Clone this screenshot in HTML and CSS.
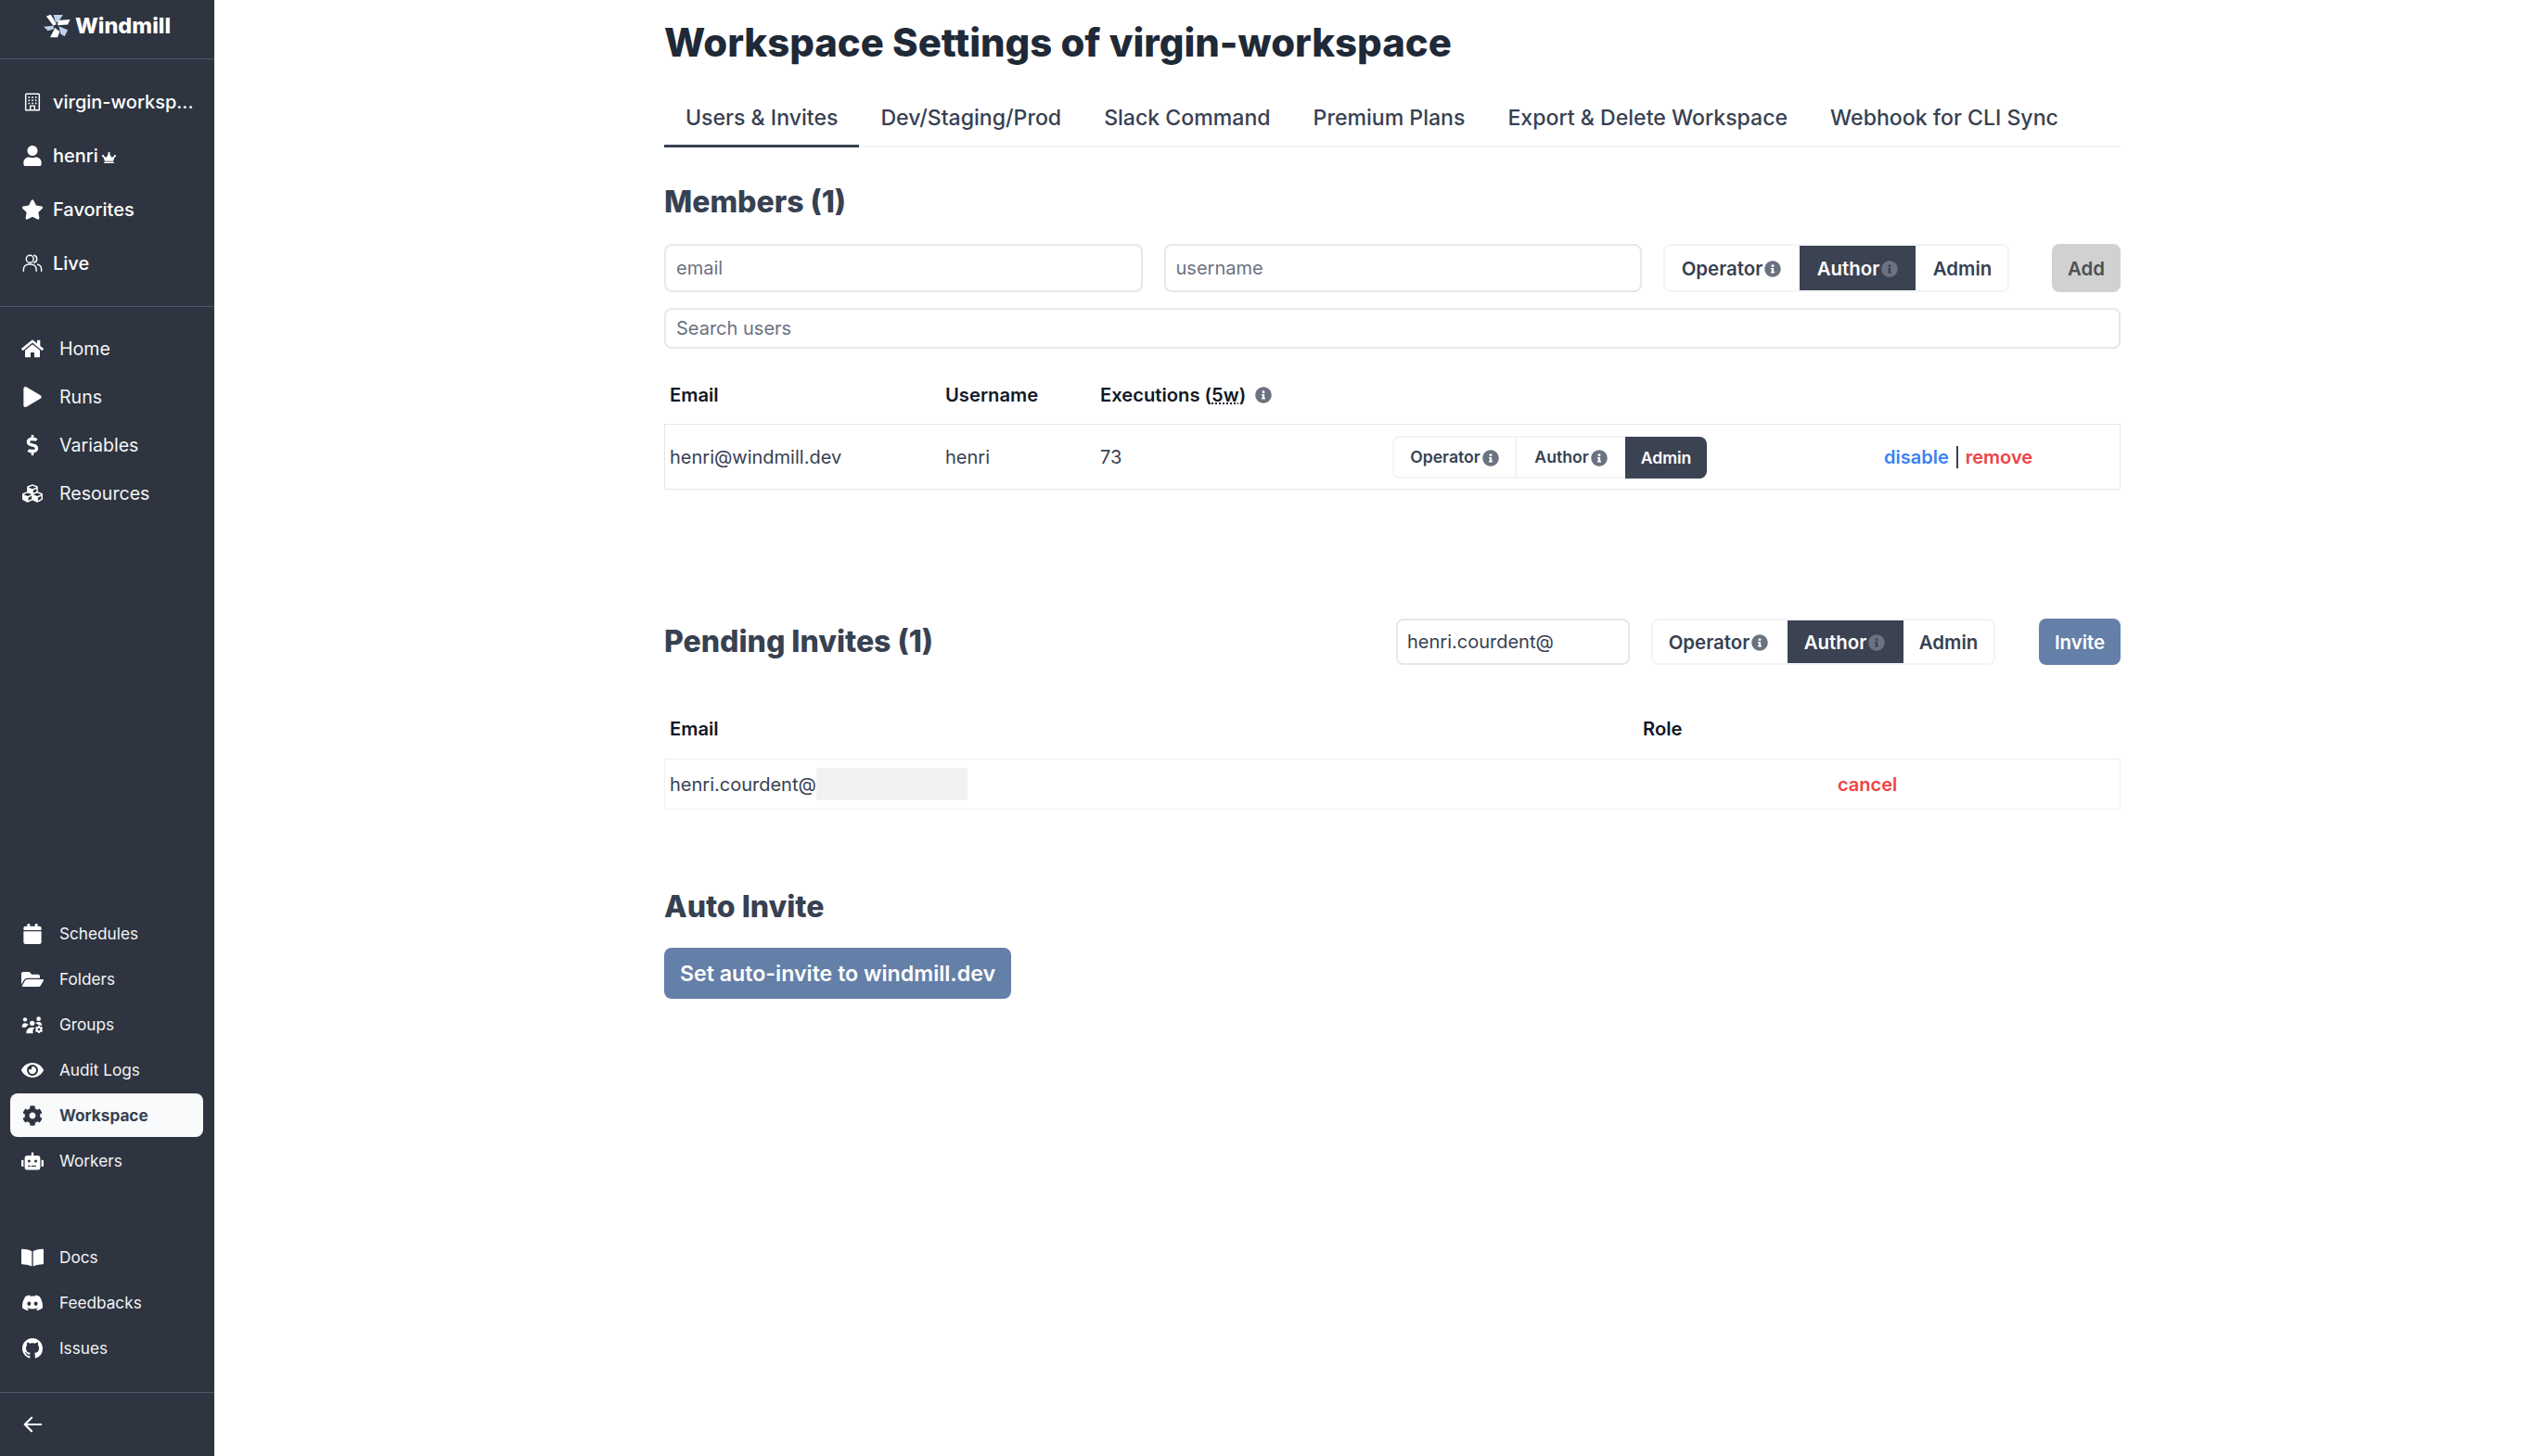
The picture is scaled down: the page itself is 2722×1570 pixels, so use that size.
FILE: index.html
```html
<!DOCTYPE html>
<html lang="en">
<head>
<meta charset="utf-8">
<title>Workspace Settings</title>
<link rel="stylesheet" href="styles.css">
</head>
<body>
<svg class="defs" aria-hidden="true">
  <symbol id="i-info" viewBox="0 0 512 512"><path d="M256 8C119.043 8 8 119.083 8 256c0 136.997 111.043 248 248 248s248-111.003 248-248C504 119.083 392.957 8 256 8zm0 110c23.196 0 42 18.804 42 42s-18.804 42-42 42-42-18.804-42-42 18.804-42 42-42zm56 254c0 6.627-5.373 12-12 12h-88c-6.627 0-12-5.373-12-12v-24c0-6.627 5.373-12 12-12h12v-64h-12c-6.627 0-12-5.373-12-12v-24c0-6.627 5.373-12 12-12h64c6.627 0 12 5.373 12 12v100h12c6.627 0 12 5.373 12 12v24z"/></symbol>
  <symbol id="i-cog" viewBox="0 0 512 512"><path d="M487.4 315.7l-42.6-24.6c4.3-23.2 4.3-47 0-70.2l42.6-24.6c4.9-2.8 7.1-8.6 5.5-14-11.1-35.6-30-67.8-54.7-94.6-3.8-4.1-10-5.1-14.8-2.3L380.8 110c-17.9-15.4-38.5-27.3-60.8-35.1V25.8c0-5.6-3.9-10.5-9.4-11.7-36.7-8.2-74.3-7.8-109.2 0-5.5 1.2-9.4 6.1-9.4 11.7V75c-22.2 7.9-42.8 19.8-60.8 35.1L88.7 85.5c-4.9-2.8-11-1.9-14.8 2.3-24.7 26.7-43.6 58.9-54.7 94.6-1.7 5.4.6 11.2 5.5 14L67.3 221c-4.3 23.2-4.3 47 0 70.2l-42.6 24.6c-4.9 2.8-7.1 8.6-5.5 14 11.1 35.6 30 67.8 54.7 94.6 3.8 4.1 10 5.1 14.8 2.3l42.6-24.6c17.9 15.4 38.5 27.3 60.8 35.1v49.2c0 5.6 3.9 10.5 9.4 11.7 36.7 8.2 74.3 7.8 109.2 0 5.5-1.2 9.4-6.1 9.4-11.7v-49.2c22.2-7.9 42.8-19.8 60.8-35.1l42.6 24.6c4.9 2.8 11 1.9 14.8-2.3 24.7-26.7 43.6-58.9 54.7-94.6 1.5-5.5-.7-11.3-5.6-14.1zM256 336c-44.1 0-80-35.9-80-80s35.9-80 80-80 80 35.9 80 80-35.9 80-80 80z"/></symbol>
</svg>
<div class="app">
  <aside class="sidebar">
    <div class="brand">
      <svg class="logo" viewBox="25 25 83 75">
        <polygon class="blade-w" points="33,32 47,27 65,57 55,62"/>
        <polygon class="blade-b" points="55,28 85,28 70,50 62,50"/>
        <polygon class="blade-w" points="70,45 107,42 100,58 68,60"/>
        <polygon class="blade-b" points="72,63 100,75 90,95 78,88"/>
        <polygon class="blade-w" points="60,68 75,80 68,98 45,98"/>
        <polygon class="blade-b" points="25,65 55,62 57,72 38,78"/>
      </svg>
      <span class="brand-name">Windmill</span>
    </div>
    <nav class="group group-top">
      <a class="item item-strong">
        <svg class="ico" viewBox="0 0 24 24"><path class="outline" d="M5 2.500h14a1 1 0 0 1 1 1v18H4v-18a1 1 0 0 1 1-1ZM9.500 21.500v-5h5v5"/><path class="outline dots" d="M8 6.500h.01M12 6.500h.01M16 6.500h.01M8 10h.01M12 10h.01M16 10h.01M8 13.500h.01M12 13.500h.01M16 13.500h.01"/></svg>
        <span class="item-label">virgin-worksp...</span>
      </a>
      <a class="item item-strong">
        <svg class="ico" viewBox="0 0 448 512"><path d="M224 256c70.7 0 128-57.3 128-128S294.7 0 224 0 96 57.3 96 128s57.3 128 128 128zm89.6 32h-16.7c-22.2 10.2-46.9 16-72.9 16s-50.6-5.8-72.9-16h-16.7C60.2 288 0 348.2 0 422.4V464c0 26.5 21.5 48 48 48h352c26.5 0 48-21.5 48-48v-41.6c0-74.2-60.2-134.4-134.4-134.4z"/></svg>
        <span class="item-label">henri</span>
        <svg class="crown" viewBox="0 0 640 512"><path d="M528 448H112c-8.8 0-16 7.2-16 16v32c0 8.8 7.2 16 16 16h416c8.8 0 16-7.2 16-16v-32c0-8.8-7.2-16-16-16zm64-320c-26.5 0-48 21.5-48 48 0 7.1 1.6 13.7 4.4 19.8L476 239.2c-15.4 9.2-35.3 4-44.2-11.6L350.3 85C361 76.2 368 63 368 48c0-26.5-21.5-48-48-48s-48 21.5-48 48c0 15 7 28.2 17.7 37l-81.5 142.6c-8.9 15.6-28.9 20.8-44.2 11.6l-72.3-43.4c2.7-6 4.4-12.7 4.4-19.8 0-26.5-21.6-48-48.1-48S0 149.5 0 176s21.5 48 48 48c2.6 0 5.2-.4 7.7-.8L128 416h384l72.3-192.8c2.5.4 5.1.8 7.7.8 26.5 0 48-21.5 48-48s-21.5-48-48-48z"/></svg>
      </a>
      <a class="item item-strong">
        <svg class="ico" viewBox="0 0 576 512"><path d="M259.3 17.8L194 150.2 47.9 171.5c-26.2 3.8-36.7 36.1-17.7 54.6l105.7 103-25 145.5c-4.5 26.3 23.2 46 46.4 33.7L288 439.6l130.7 68.7c23.2 12.2 50.9-7.4 46.4-33.7l-25-145.5 105.7-103c19-18.5 8.5-50.8-17.7-54.6L382 150.2 316.7 17.8c-11.7-23.6-45.6-23.9-57.4 0z"/></svg>
        <span class="item-label">Favorites</span>
      </a>
      <a class="item item-strong">
        <svg class="ico" viewBox="0 0 24 24"><path class="outline" d="M1.500 21v-2a6 6 0 0 1 6-6h3a6 6 0 0 1 6 6v2M14 2.500a4.500 4.500 0 0 1 0 8.600M18 13.200a6 6 0 0 1 4.500 5.800v2"/><circle class="outline" cx="9" cy="6.800" r="4.300"/></svg>
        <span class="item-label">Live</span>
      </a>
    </nav>
    <nav class="group group-main">
      <a class="item item-main">
        <svg class="ico" viewBox="0 0 576 512"><path d="M280.37 148.26L96 300.11V464a16 16 0 0 0 16 16l112.06-.29a16 16 0 0 0 15.92-16V368a16 16 0 0 1 16-16h64a16 16 0 0 1 16 16v95.64a16 16 0 0 0 16 16.05L464 480a16 16 0 0 0 16-16V300L295.67 148.26a12.19 12.19 0 0 0-15.3 0zM571.6 251.47L488 182.56V44.05a12 12 0 0 0-12-12h-56a12 12 0 0 0-12 12v72.61L318.47 43a48 48 0 0 0-61 0L4.34 251.47a12 12 0 0 0-1.6 16.9l25.5 31A12 12 0 0 0 45.15 301l235.22-193.74a12.19 12.19 0 0 1 15.3 0L530.9 301a12 12 0 0 0 16.9-1.6l25.5-31a12 12 0 0 0-1.7-16.93z"/></svg>
        <span class="item-label">Home</span>
      </a>
      <a class="item item-main">
        <svg class="ico" viewBox="0 0 448 512"><path d="M424.4 214.7L72.4 6.6C43.8-10.3 0 6.1 0 47.9V464c0 37.5 40.7 60.1 72.4 41.3l352-208c31.4-18.5 31.5-64.1 0-82.6z"/></svg>
        <span class="item-label">Runs</span>
      </a>
      <a class="item item-main">
        <svg class="ico" viewBox="0 0 288 512"><path d="M209.2 233.4l-108-31.6C88.7 198.2 80 186.5 80 173.5c0-16.3 13.2-29.5 29.5-29.5h66.3c12.2 0 24.2 3.7 34.2 10.5 6.1 4.1 14.3 3.1 19.5-2l34.8-34c7.1-6.9 6.1-18.4-1.8-24.5C238 74.8 207.4 64.1 176 64V16c0-8.8-7.2-16-16-16h-32c-8.8 0-16 7.2-16 16v48h-2.5C45.8 64-5.4 118.7.5 183.6c4.2 46.1 39.4 83.6 83.8 96.6l102.5 30c12.5 3.7 21.2 15.3 21.2 28.3 0 16.3-13.2 29.5-29.5 29.5h-66.3C100 368 88 364.3 78 357.5c-6.1-4.1-14.3-3.1-19.5 2l-34.8 34c-7.1 6.9-6.1 18.4 1.8 24.5 24.5 19.2 55.1 29.9 86.5 30v48c0 8.8 7.2 16 16 16h32c8.8 0 16-7.2 16-16v-48.2c46.6-.9 90.3-28.6 105.7-72.7 21.5-61.6-14.6-124.8-72.5-141.7z"/></svg>
        <span class="item-label">Variables</span>
      </a>
      <a class="item item-main">
        <svg class="ico" viewBox="0 0 512 512"><path d="M488.6 250.2L392 214V105.5c0-15-9.3-28.4-23.4-33.7l-100-37.5c-8.1-3.1-17.1-3.1-25.3 0l-100 37.5c-14.1 5.3-23.4 18.7-23.4 33.7V214l-96.6 36.2C9.3 255.5 0 268.9 0 283.9V394c0 13.6 7.7 26.1 19.9 32.2l100 50c10.1 5.1 22.1 5.1 32.2 0l103.9-52 103.9 52c10.1 5.1 22.1 5.1 32.2 0l100-50c12.2-6.1 19.9-18.6 19.9-32.2V283.9c0-15-9.3-28.4-23.4-33.7zM358 214.8l-85 31.9v-68.2l85-37v73.3zM154 104.1l102-38.2 102 38.2v.6l-102 41.4-102-41.4v-.6zm84 291.1l-85 42.5v-79.1l85-38.8v75.4zm0-112l-102 41.4-102-41.4v-.6l102-38.2 102 38.2v.6zm240 112l-85 42.5v-79.1l85-38.8v75.4zm0-112l-102 41.4-102-41.4v-.6l102-38.2 102 38.2v.6z"/></svg>
        <span class="item-label">Resources</span>
      </a>
    </nav>
    <nav class="group group-low">
      <a class="item item-small">
        <svg class="ico" viewBox="0 0 448 512"><path d="M12 192h424c6.6 0 12 5.4 12 12v260c0 26.5-21.5 48-48 48H48c-26.5 0-48-21.5-48-48V204c0-6.6 5.4-12 12-12zm436-44v-36c0-26.5-21.5-48-48-48h-48V12c0-6.6-5.4-12-12-12h-40c-6.6 0-12 5.4-12 12v52H160V12c0-6.6-5.4-12-12-12h-40c-6.6 0-12 5.4-12 12v52H48C21.5 64 0 85.5 0 112v36c0 6.6 5.4 12 12 12h424c6.6 0 12-5.4 12-12z"/></svg>
        <span class="item-label">Schedules</span>
      </a>
      <a class="item item-small">
        <svg class="ico" viewBox="0 0 576 512"><path d="M572.694 292.093L500.27 416.248A63.997 63.997 0 0 1 444.989 448H45.025c-18.523 0-30.064-20.093-20.731-36.093l72.424-124.155A64 64 0 0 1 152 256h399.964c18.523 0 30.064 20.093 20.73 36.093zM152 224h328v-48c0-26.51-21.49-48-48-48H272l-64-64H48C21.49 64 0 85.49 0 112v278.046l69.077-118.418C86.214 242.25 117.989 224 152 224z"/></svg>
        <span class="item-label">Folders</span>
      </a>
      <a class="item item-small">
        <svg class="ico" viewBox="38 14 72 60"><circle cx="50" cy="27" r="6.500"/><circle cx="94" cy="25" r="7"/><circle cx="73" cy="39" r="8"/><path d="M40 52q0-13 11-13 7 0 10 5-6 3-8 8ZM54 72q0-20 19-20 5 0 8 2-8 6-5 18ZM83 38q5-3 11-3 10 0 11 12l-10-2Z"/><use href="#i-cog" x="82" y="46" width="26" height="26"/></svg>
        <span class="item-label">Groups</span>
      </a>
      <a class="item item-small">
        <svg class="ico" viewBox="0 0 576 512"><path d="M572.52 241.4C518.29 135.59 410.93 64 288 64S57.68 135.64 3.48 241.41a32.35 32.35 0 0 0 0 29.19C57.71 376.41 165.07 448 288 448s230.32-71.64 284.52-177.41a32.35 32.35 0 0 0 0-29.19zM288 400a144 144 0 1 1 144-144 143.93 143.93 0 0 1-144 144zm0-240a95.31 95.31 0 0 0-25.31 3.79 47.85 47.85 0 0 1-66.9 66.9A95.78 95.78 0 1 0 288 160z"/></svg>
        <span class="item-label">Audit Logs</span>
      </a>
      <a class="item item-small item-active">
        <svg class="ico" viewBox="0 0 512 512"><use href="#i-cog"/></svg>
        <span class="item-label">Workspace</span>
      </a>
      <a class="item item-small">
        <svg class="ico" viewBox="0 0 640 512"><path d="M32,224H64V416H32A31.96166,31.96166,0,0,1,0,384V256A31.96166,31.96166,0,0,1,32,224Zm512-48V448a64.06328,64.06328,0,0,1-64,64H160a64.06328,64.06328,0,0,1-64-64V176a79.974,79.974,0,0,1,80-80H288V32a32,32,0,0,1,64,0V96H464A79.974,79.974,0,0,1,544,176ZM264,256a40,40,0,1,0-40,40A39.997,39.997,0,0,0,264,256Zm-8,128H192v32h64Zm96,0H288v32h64ZM456,256a40,40,0,1,0-40,40A39.997,39.997,0,0,0,456,256Zm-32,128H360v32h64Zm184-160a31.96,31.96,0,0,1,32,32V384a31.96,31.96,0,0,1-32,32H576V224Z"/></svg>
        <span class="item-label">Workers</span>
      </a>
    </nav>
    <nav class="group group-links">
      <a class="item item-small">
        <svg class="ico" viewBox="0 0 576 512"><path d="M542.22 32.05c-54.8 3.11-163.72 14.43-230.96 55.59-4.64 2.84-7.27 7.89-7.27 13.17v363.87c0 11.55 12.63 18.85 23.28 13.49 69.18-34.82 169.23-44.32 218.7-46.92 16.89-.89 30.02-14.43 30.02-30.66V62.75c.01-17.71-15.35-31.74-33.77-30.7zM264.73 87.64C197.5 46.48 88.58 35.17 33.78 32.05 15.36 31.01 0 45.04 0 62.75V400.6c0 16.24 13.13 29.78 30.02 30.66 49.49 2.6 149.59 12.11 218.77 46.95 10.62 5.35 23.21-1.94 23.21-13.46V100.63c0-5.29-2.62-10.14-7.27-12.99z"/></svg>
        <span class="item-label">Docs</span>
      </a>
      <a class="item item-small">
        <svg class="ico" viewBox="0 0 16 16"><path d="M13.545 2.907a13.227 13.227 0 0 0-3.257-1.011.05.05 0 0 0-.052.025c-.141.25-.297.577-.406.833a12.19 12.19 0 0 0-3.658 0 8.258 8.258 0 0 0-.412-.833.051.051 0 0 0-.052-.025c-1.125.194-2.22.534-3.257 1.011a.041.041 0 0 0-.021.018C.356 6.024-.213 9.047.066 12.032c.001.014.01.028.021.037a13.276 13.276 0 0 0 3.995 2.02.05.05 0 0 0 .056-.019c.308-.42.582-.863.818-1.329a.05.05 0 0 0-.01-.059.051.051 0 0 0-.018-.011 8.875 8.875 0 0 1-1.248-.595.05.05 0 0 1-.02-.066.051.051 0 0 1 .015-.019c.084-.063.168-.129.248-.195a.05.05 0 0 1 .051-.007c2.619 1.196 5.454 1.196 8.041 0a.052.052 0 0 1 .053.007c.08.066.164.132.248.195a.051.051 0 0 1-.004.085 8.254 8.254 0 0 1-1.249.594.05.05 0 0 0-.03.03.052.052 0 0 0 .003.041c.24.465.515.909.817 1.329a.05.05 0 0 0 .056.019 13.235 13.235 0 0 0 4.001-2.02.049.049 0 0 0 .021-.037c.334-3.451-.559-6.449-2.366-9.106a.034.034 0 0 0-.02-.019Zm-8.198 7.307c-.789 0-1.438-.724-1.438-1.612 0-.889.637-1.613 1.438-1.613.807 0 1.45.73 1.438 1.613 0 .888-.637 1.612-1.438 1.612Zm5.316 0c-.788 0-1.438-.724-1.438-1.612 0-.889.637-1.613 1.438-1.613.807 0 1.451.73 1.438 1.613 0 .888-.631 1.612-1.438 1.612Z"/></svg>
        <span class="item-label">Feedbacks</span>
      </a>
      <a class="item item-small">
        <svg class="ico" viewBox="0 0 16 16"><path d="M8 0C3.58 0 0 3.58 0 8c0 3.54 2.29 6.53 5.47 7.59.4.07.55-.17.55-.38 0-.19-.01-.82-.01-1.49-2.01.37-2.53-.49-2.69-.94-.09-.23-.48-.94-.82-1.13-.28-.15-.68-.52-.01-.53.63-.01 1.08.58 1.23.82.72 1.21 1.87.87 2.33.66.07-.52.28-.87.51-1.07-1.78-.2-3.64-.89-3.64-3.95 0-.87.31-1.59.82-2.15-.08-.2-.36-1.02.08-2.12 0 0 .67-.21 2.2.82.64-.18 1.32-.27 2-.27.68 0 1.36.09 2 .27 1.53-1.04 2.2-.82 2.2-.82.44 1.1.16 1.92.08 2.12.51.56.82 1.27.82 2.15 0 3.07-1.87 3.75-3.65 3.95.29.25.54.73.54 1.48 0 1.07-.01 1.93-.01 2.2 0 .21.15.46.55.38A8.013 8.013 0 0016 8c0-4.42-3.58-8-8-8z"/></svg>
        <span class="item-label">Issues</span>
      </a>
    </nav>
    <div class="side-foot">
      <svg class="ico" viewBox="0 0 24 24"><path class="outline thick" d="M22 12H3M11 4l-8 8 8 8"/></svg>
    </div>
  </aside>

  <main class="main">
    <h1 class="title">Workspace Settings of virgin-workspace</h1>
    <div class="tabs">
      <a class="tab tab-active">Users &amp; Invites</a>
      <a class="tab">Dev/Staging/Prod</a>
      <a class="tab">Slack Command</a>
      <a class="tab">Premium Plans</a>
      <a class="tab">Export &amp; Delete Workspace</a>
      <a class="tab">Webhook for CLI Sync</a>
    </div>

    <h2 class="heading heading-members">Members (1)</h2>
    <div class="add-row">
      <input class="field field-wide" placeholder="email">
      <input class="field field-wide" placeholder="username">
      <div class="seg seg-add">
        <span class="seg-btn">Operator<svg class="info"><use href="#i-info"/></svg></span>
        <span class="seg-btn seg-on">Author<svg class="info"><use href="#i-info"/></svg></span>
        <span class="seg-btn seg-last">Admin</span>
      </div>
      <button class="btn btn-disabled btn-add">Add</button>
    </div>
    <input class="field field-search" placeholder="Search users">

    <div class="members-grid grid-head">
      <span>Email</span>
      <span>Username</span>
      <span class="exec">Executions (<span class="abbr">5w</span>)<svg class="info info-head"><use href="#i-info"/></svg></span>
    </div>
    <div class="members-grid grid-row">
      <span>henri@windmill.dev</span>
      <span>henri</span>
      <span>73</span>
      <div class="seg seg-row">
        <span class="seg-btn seg-div">Operator<svg class="info"><use href="#i-info"/></svg></span>
        <span class="seg-btn">Author<svg class="info"><use href="#i-info"/></svg></span>
        <span class="seg-btn seg-on seg-end">Admin</span>
      </div>
      <div class="actions">
        <a class="link link-blue">disable</a>
        <span class="sep"></span>
        <a class="link link-red">remove</a>
      </div>
    </div>

    <section class="pending-head">
      <h2 class="heading">Pending Invites (1)</h2>
      <div class="pending-form">
        <input class="field field-invite" value="henri.courdent@">
        <div class="seg seg-invite">
          <span class="seg-btn">Operator<svg class="info"><use href="#i-info"/></svg></span>
          <span class="seg-btn seg-on">Author<svg class="info"><use href="#i-info"/></svg></span>
          <span class="seg-btn seg-last">Admin</span>
        </div>
        <button class="btn btn-blue btn-invite">Invite</button>
      </div>
    </section>

    <div class="pending-grid grid-head-2">
      <span>Email</span>
      <span>Role</span>
    </div>
    <div class="pending-grid grid-row-2">
      <span class="mail">henri.courdent@<span class="redact"></span></span>
      <span></span>
      <a class="link link-red">cancel</a>
    </div>

    <h2 class="heading heading-auto">Auto Invite</h2>
    <button class="btn btn-blue btn-auto">Set auto-invite to windmill.dev</button>
  </main>
</div>
</body>
</html>
```
FILE: styles.css
```css
* { box-sizing: border-box; }
html, body { margin: 0; padding: 0; height: 100%; }
body { font-family: Inter, "Liberation Sans", sans-serif; color: #374151; background: #fff; overflow: hidden; }
.defs { width: 0; height: 0; position: absolute; overflow: hidden; }

.app { display: flex; height: 1570px; overflow: hidden; }

/* sidebar */
.sidebar { width: 231px; flex: none; height: 1570px; background: #2e3440; color: #f3f4f6; display: flex; flex-direction: column; }
.brand { height: 64px; flex: none; display: flex; align-items: center; justify-content: center; gap: 5px; padding-bottom: 8px; border-bottom: 1px solid #4c566a; }
.logo { width: 29px; height: 26px; }
.blade-w { fill: #fff; }
.blade-b { fill: #bcd0ee; }
.brand-name { color: #fff; font-weight: 800; font-size: 23.5px; line-height: 28px; }
.group { display: flex; flex-direction: column; }
.group-top { padding: 17px 0; border-bottom: 1px solid #4c566a; }
.group-main { padding-top: 19px; }
.group-low { margin-top: auto; }
.group-links { margin-top: 55px; }
.item { display: flex; align-items: center; margin: 0 12px; padding-left: 11px; color: #f3f4f6; }
.ico { width: 24px; height: 22px; flex: none; fill: #fff; }
.outline { fill: none; stroke: #fff; stroke-width: 1.6; stroke-linecap: round; stroke-linejoin: round; }
.dots { stroke-width: 2; }
.thick { stroke-width: 2.4; }
.item-label { white-space: nowrap; }
.item-strong { height: 58px; font-size: 20px; font-weight: 500; gap: 10px; }
.item-strong .item-label { color: #fff; }
.item-main { height: 52px; font-size: 19.6px; font-weight: 400; gap: 17px; }
.item-small { height: 49px; font-size: 17.2px; font-weight: 400; gap: 17px; }
.crown { width: 15px; height: 12px; fill: #fff; margin: 3px 0 0 -6px; }
.item-active { margin: 1px 12px 1px 11px; padding-left: 12px; height: 47px; background: #f9fafb; border-radius: 8px; color: #374151; font-weight: 700; }
.item-active .ico { fill: #2e3440; }
.side-foot { margin-top: 23px; height: 69px; flex: none; border-top: 1px solid #4c566a; display: flex; align-items: center; padding-left: 23px; }

/* main */
.main { width: 1570px; margin-left: 485px; flex: none; padding-top: 20px; display: flex; flex-direction: column; align-items: stretch; }
.title { margin: 0; font-size: 41.85px; line-height: 52px; font-weight: 800; color: #1f2937; height: 52px; white-space: nowrap; }
.tabs { display: flex; margin-top: 23px; height: 64px; border-bottom: 2px solid #f3f4f6; flex: none; }
.tab { height: 64px; line-height: 64px; padding: 0 23px; font-size: 23.1px; font-weight: 500; color: #374151; white-space: nowrap; }
.tab-active { border-bottom: 3px solid #374151; }
.heading { margin: 0; font-size: 32px; font-weight: 800; line-height: 40px; color: #374151; white-space: nowrap; }
.heading-members { margin-top: 39px; }
.add-row { display: flex; align-items: stretch; margin-top: 25px; height: 52px; flex: none; }
.field { font: inherit; font-size: 20px; color: #374151; background: #fff; border: 2px solid #e5e7eb; border-radius: 8px; padding: 0 11px; outline: none; }
.field::placeholder { color: #6b7280; opacity: 1; }
.field-wide { width: 516px; margin-right: 23px; }
.field-search { height: 44px; margin-top: 17px; flex: none; }
.seg { display: flex; border: 2px solid #f3f4f6; border-radius: 8px; background: #fff; flex: none; }
.seg-btn { display: flex; align-items: center; justify-content: center; font-weight: 600; color: #374151; white-space: nowrap; }
.seg-on { background: #3b4252; color: #fff; }
.info { fill: #6b7280; width: 18px; height: 18px; margin-left: 2px; margin-top: 2px; flex: none; }
.seg-add { width: 373px; }
.seg-add .seg-btn, .seg-invite .seg-btn { font-size: 20.4px; }
.seg-add .seg-btn:nth-child(1) { width: 145px; padding-right: 2px; }
.seg-add .seg-btn:nth-child(2) { width: 125px; }
.seg-add .seg-btn:nth-child(3) { flex: 1; padding-left: 2px; }
.btn { font: inherit; border: 0; border-radius: 8px; font-weight: 600; flex: none; padding: 0; }
.btn-disabled { background: #d1d1d1; color: #4b5055; }
.btn-blue { background: #647fa8; color: #fff; }
.btn-add { width: 74px; margin-left: 46px; font-size: 20.4px; }

.members-grid { display: grid; grid-template-columns: 297px 167px 315px 530px 1fr; align-items: center; padding-left: 5px; border: 1px solid transparent; font-size: 20px; flex: none; }
.grid-head { margin-top: 30px; height: 38px; font-weight: 600; font-size: 20.2px; color: #111827; }
.exec { display: flex; align-items: center; }
.abbr { text-decoration: underline dotted; }
.info-head { margin-left: 10px; }
.grid-row { margin-top: 13px; height: 71px; border-color: #e5e7eb; color: #374151; }
.seg-row { width: 339px; height: 46px; }
.seg-row .seg-btn { font-size: 17.6px; }
.seg-row .seg-btn:nth-child(1) { width: 132px; }
.seg-row .seg-btn:nth-child(2) { width: 117px; }
.seg-row .seg-btn:nth-child(3) { flex: 1; }
.seg-div { border-right: 2px solid #f3f4f6; }
.seg-end { margin: -1px -2px -2px 0; border-radius: 0 8px 8px 0; }
.actions { display: flex; align-items: center; }
.link { font-weight: 600; font-size: 20px; }
.link-blue { color: #3b82f6; }
.link-red { color: #ef4444; }
.sep { width: 2px; height: 24px; background: #374151; margin: 0 8px; }

.pending-head { display: flex; align-items: center; justify-content: space-between; margin-top: 139px; height: 50px; flex: none; }
.pending-form { display: flex; align-items: stretch; height: 50px; }
.field-invite { width: 252px; margin-right: 23px; padding: 0 10px; }
.seg-invite { width: 371px; }
.seg-invite .seg-btn:nth-child(1) { width: 145px; padding-right: 4px; }
.seg-invite .seg-btn:nth-child(2) { width: 125px; padding-right: 2px; }
.seg-invite .seg-btn:nth-child(3) { flex: 1; }
.btn-invite { width: 88px; margin-left: 47px; font-size: 20.4px; }

.pending-grid { display: grid; grid-template-columns: 1049px 210px 1fr; align-items: center; padding-left: 5px; border: 1px solid transparent; font-size: 20px; flex: none; }
.grid-head-2 { margin-top: 49px; height: 38px; font-weight: 600; font-size: 20.2px; color: #111827; }
.grid-row-2 { margin-top: 14px; height: 55px; border-color: #f0f0f0; }
.mail { display: flex; align-items: center; }
.redact { display: block; width: 163px; height: 35px; background: #f2f2f2; }

.heading-auto { margin-top: 85px; }
.btn-auto { width: 374px; height: 55px; margin-top: 24px; font-size: 23.2px; align-self: flex-start; }
```
